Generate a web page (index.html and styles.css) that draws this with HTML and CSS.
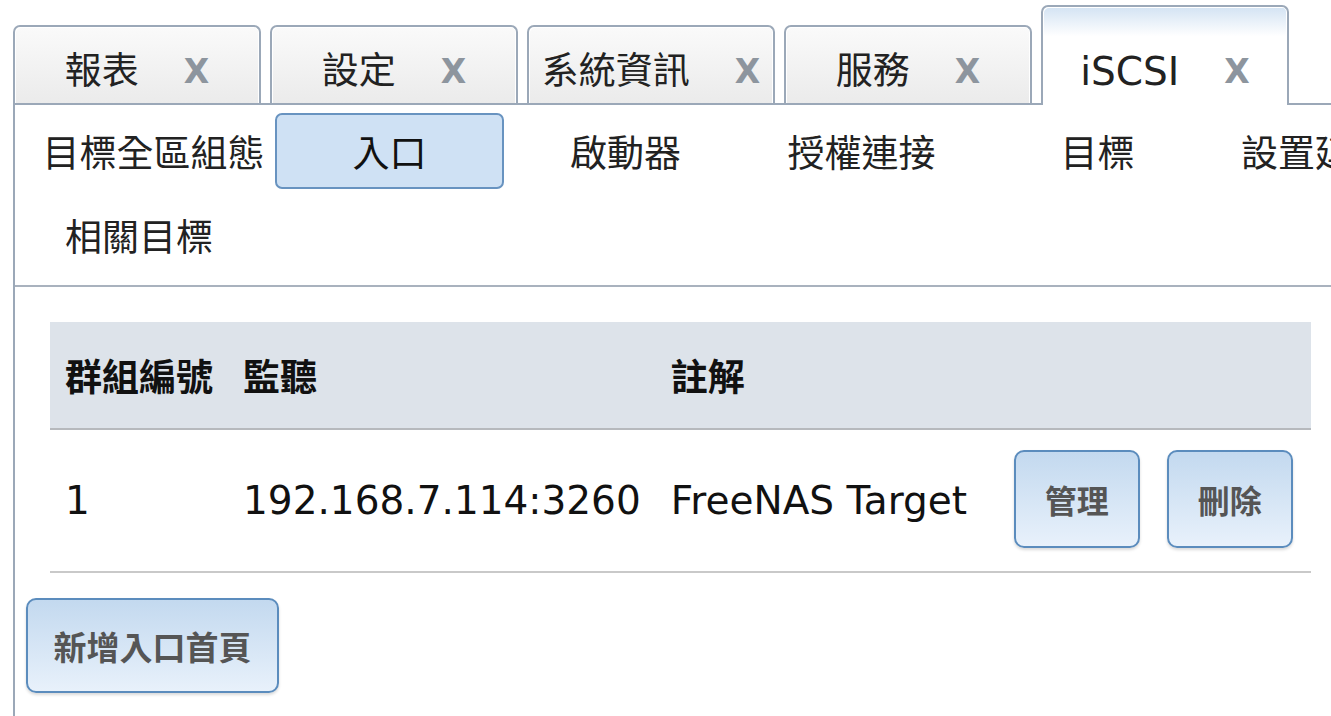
FILE: index.html
```html
<!DOCTYPE html>
<html lang="zh-Hant">

<head>
    <meta charset="UTF-8">
    <title>iSCSI 入口</title>
    <meta name="viewport" content="width=device-width, initial-scale=1.0" />
    <link rel="stylesheet" href="styles.css">
</head>

<body>
    <div class="page">

        <div class="tabs">
            <div class="tab"><span class="tab-label">報表</span><span class="tab-close">X</span></div>
            <div class="tab"><span class="tab-label">設定</span><span class="tab-close">X</span></div>
            <div class="tab"><span class="tab-label">系統資訊</span><span class="tab-close">X</span></div>
            <div class="tab"><span class="tab-label">服務</span><span class="tab-close">X</span></div>
            <div class="tab tab-active"><span class="tab-label">iSCSI</span><span class="tab-close">X</span></div>
        </div>

        <div class="panel">
            <div class="subnav">
                <div class="subnav-item">目標全區組態</div>
                <div class="subnav-item subnav-active">入口</div>
                <div class="subnav-item">啟動器</div>
                <div class="subnav-item">授權連接</div>
                <div class="subnav-item">目標</div>
                <div class="subnav-item">設置延伸區</div>
                <div class="subnav-item subnav-wrapped">相關目標</div>
            </div>

            <div class="content">
                <table class="portal-table">
                    <tr>
                        <th class="col-id">群組編號</th>
                        <th class="col-listen">監聽</th>
                        <th class="col-note">註解</th>
                        <th></th>
                    </tr>
                    <tr>
                        <td>1</td>
                        <td>192.168.7.114:3260</td>
                        <td>FreeNAS Target</td>
                        <td>
                            <div class="actions">
                                <button class="btn btn-row">管理</button>
                                <button class="btn btn-row">刪除</button>
                            </div>
                        </td>
                    </tr>
                </table>

                <button class="btn btn-add">新增入口首頁</button>
            </div>
        </div>

    </div>
</body>

</html>
```

FILE: styles.css
```css
* {
    box-sizing: border-box;
}

body {
    margin: 0;
    font-family: "DejaVu Sans", "Noto Sans CJK TC", sans-serif;
    color: #1a1a1a;
    background-color: white;
    width: 1331px;
    height: 716px;
    overflow: hidden;
}

.page {
    padding: 5px 0 0 13px;
    width: 1400px;
}

/* top tabs */
.tabs {
    display: flex;
    align-items: flex-end;
    gap: 9px;
    height: 98px;
}

.tab {
    width: 248px;
    height: 78px;
    padding-top: 12px;
    border: 2px solid #9ba8b8;
    border-bottom: none;
    border-radius: 7px 7px 0 0;
    background: linear-gradient(#fafafa, #ebebeb);
    box-shadow: inset 1px 1px 0 white, inset -1px 0 0 white;
    display: flex;
    align-items: center;
    justify-content: center;
    gap: 45px;
}

.tab-active {
    height: 100px;
    margin-bottom: -2px;
    padding-top: 30px;
    background: linear-gradient(#d3e3f3, white 30%);
    position: relative;
    z-index: 1;
}

.tab-label {
    font-size: 37px;
    line-height: 1;
    color: #222;
    white-space: nowrap;
}

.tab-active .tab-label {
    font-size: 39px;
}

.tab-close {
    font-family: "DejaVu Sans", sans-serif;
    font-weight: bold;
    font-size: 33px;
    line-height: 1;
    color: #8d959e;
}

/* panel */
.panel {
    width: 1333px;
    min-height: 613px;
    border-left: 2px solid #9ba8b8;
    border-top: 2px solid #9ba8b8;
}

.subnav {
    display: grid;
    grid-template-columns: repeat(6, 229px);
    column-gap: 7px;
    row-gap: 8px;
    padding: 8px 0 12px 24px;
    border-bottom: 2px solid #a9b2be;
}

.subnav-item {
    height: 76px;
    display: flex;
    align-items: center;
    justify-content: center;
    font-size: 37px;
    color: #222;
    white-space: nowrap;
    border: 2px solid transparent;
    border-radius: 7px;
}

.subnav-active {
    background-color: #cfe1f4;
    border-color: #6893c0;
    color: #111;
}

.subnav-wrapped {
    justify-content: flex-start;
    padding-left: 24px;
}

.content {
    padding: 35px 20px 0 11px;
}

/* table */
.portal-table {
    width: 1261px;
    margin: 0 0 25px 24px;
    border-collapse: collapse;
}

.portal-table th {
    height: 107px;
    padding: 0 15px;
    background-color: #dde3ea;
    border-bottom: 2px solid #b6b9bd;
    text-align: left;
    font-size: 37px;
    font-weight: bold;
    color: #111;
    white-space: nowrap;
}

.col-id {
    width: 178px;
}

.col-listen {
    width: 427px;
}

.col-note {
    width: 343px;
}

.portal-table td {
    height: 143px;
    padding: 0 15px;
    border-bottom: 2px solid #c9c9c9;
    font-size: 39px;
    color: #111;
    white-space: nowrap;
}

.actions {
    display: flex;
    align-items: center;
    gap: 27px;
    margin-top: -4px;
}

.btn {
    border: 2px solid #5b8cbd;
    border-radius: 10px;
    background: linear-gradient(#c3d9ef, #e8f1fb);
    box-shadow: 0 2px 3px rgba(0, 0, 0, 0.15);
    font-family: "Noto Sans CJK TC", sans-serif;
    font-weight: bold;
    color: #555;
    cursor: pointer;
}

.btn-row {
    width: 126px;
    height: 98px;
    font-size: 32px;
}

.btn-add {
    width: 253px;
    height: 95px;
    font-size: 33px;
}
```
